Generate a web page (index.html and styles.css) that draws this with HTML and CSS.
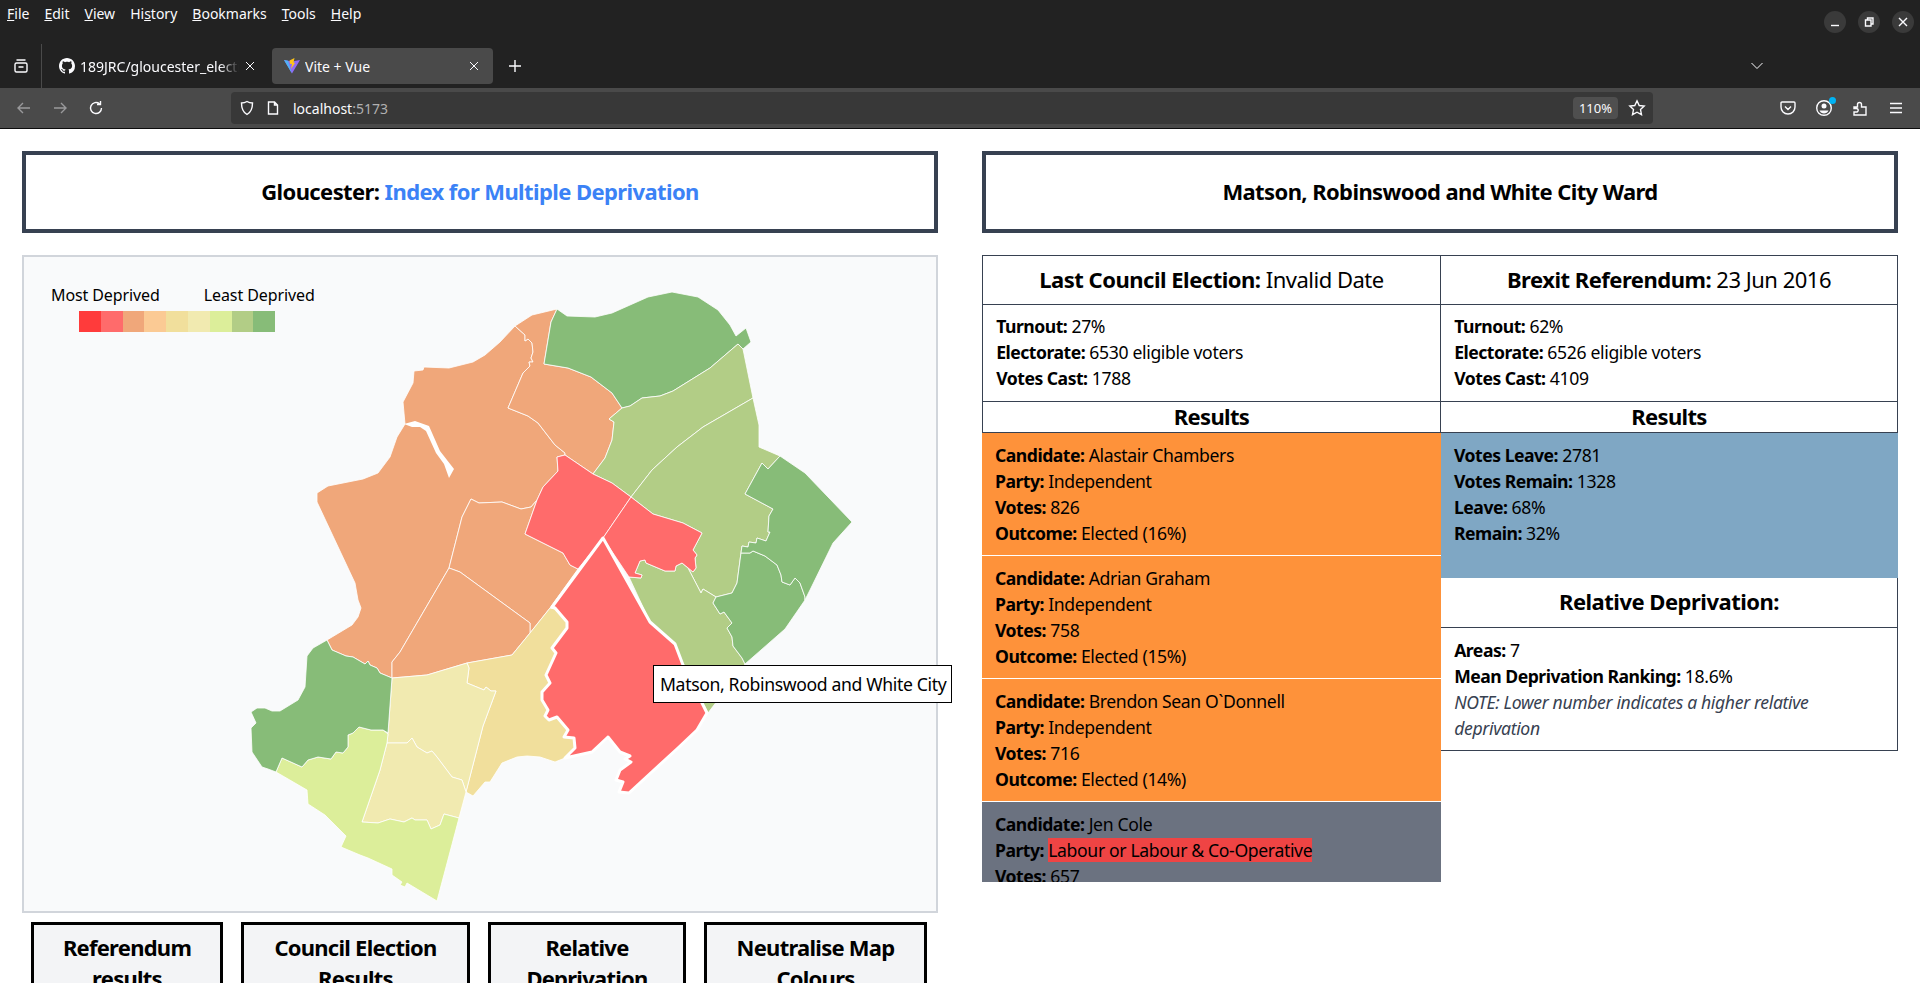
FILE: index.html
```html
<!DOCTYPE html>
<html lang="en">
<head>
    <meta charset="UTF-8">
    <meta name="viewport" content="width=device-width, initial-scale=1.0">
    <title>Vite + Vue</title>
    <link rel="stylesheet" href="styles.css">
</head>
<body>
    <!-- browser frame -->
    <div class="menu-row">
        <nav class="menu-items">
            <span><u>F</u>ile</span>
            <span><u>E</u>dit</span>
            <span><u>V</u>iew</span>
            <span>Hi<u>s</u>tory</span>
            <span><u>B</u>ookmarks</span>
            <span><u>T</u>ools</span>
            <span><u>H</u>elp</span>
        </nav>
        <div class="window-btns">
            <span class="window-btn"><svg width="12" height="12" viewBox="0 0 12 12"><path d="M2 9.5h8" class="ico"/></svg></span>
            <span class="window-btn"><svg width="12" height="12" viewBox="0 0 12 12"><path d="M2.5 4h5.500v6h-5.500zM4.500 4V2h5.500v6H8" class="ico"/></svg></span>
            <span class="window-btn"><svg width="12" height="12" viewBox="0 0 12 12"><path d="M2 2l8 8M10 2l-8 8" class="ico"/></svg></span>
        </div>
    </div>
    <div class="tab-row">
        <span class="tray-icon"><svg width="16" height="16" viewBox="0 0 16 16"><rect x="2" y="5" width="12" height="9" rx="1.500" class="ico"/><path d="M3.500 2h9M5.500 9h5" class="ico"/></svg></span>
        <div class="tab">
            <svg width="16" height="16" viewBox="0 0 16 16"><path fill="#fbfbfe" d="M8 0C3.58 0 0 3.58 0 8c0 3.54 2.29 6.53 5.47 7.59.4.07.55-.17.55-.38 0-.19-.01-.82-.01-1.49-2.01.37-2.53-.49-2.69-.94-.09-.23-.48-.94-.82-1.13-.28-.15-.68-.52-.01-.53.63-.01 1.08.58 1.23.82.72 1.21 1.87.87 2.33.66.07-.52.28-.87.51-1.07-1.78-.2-3.64-.89-3.64-3.95 0-.87.31-1.59.82-2.15-.08-.2-.36-1.02.08-2.12 0 0 .67-.21 2.2.82.64-.18 1.32-.27 2-.27.68 0 1.36.09 2 .27 1.53-1.04 2.2-.82 2.2-.82.44 1.1.16 1.92.08 2.12.51.56.82 1.27.82 2.15 0 3.07-1.87 3.75-3.65 3.95.29.25.54.73.54 1.48 0 1.07-.01 1.93-.01 2.2 0 .21.15.46.55.38A8.013 8.013 0 0016 8c0-4.42-3.58-8-8-8z"/></svg>
            <span class="tab-title tab-title-fade">189JRC/gloucester_elections</span>
            <svg width="12" height="12" viewBox="0 0 12 12"><path d="M2 2l8 8M10 2l-8 8" class="ico-thin"/></svg>
        </div>
        <div class="tab tab-active">
            <svg width="16" height="16" viewBox="0 0 16 16"><path fill="#8f6bf5" d="M0 2l8 1.500L16 2 8 15.500z"/><path fill="#4fb3f5" d="M0 2l4 .800L8 15.500z"/><path fill="#ffc517" d="M5.500 2.500L10.500 0 9.500 4.500 11 5 7 11l1-5-2-.300z"/></svg>
            <span class="tab-title">Vite + Vue</span>
            <svg width="12" height="12" viewBox="0 0 12 12"><path d="M2 2l8 8M10 2l-8 8" class="ico-thin"/></svg>
        </div>
        <span class="new-tab"><svg width="14" height="14" viewBox="0 0 14 14"><path d="M7 1v12M1 7h12" class="ico"/></svg></span>
        <span class="tab-list"><svg width="14" height="10" viewBox="0 0 14 10"><path d="M1.500 2L7 7.500 12.500 2" class="ico-thin"/></svg></span>
    </div>
    <div class="toolbar">
        <div class="nav-btns">
            <svg width="16" height="16" viewBox="0 0 16 16"><path d="M14 8H2M7 3L2 8l5 5" class="ico ico-off"/></svg>
            <svg width="16" height="16" viewBox="0 0 16 16"><path d="M2 8h12M9 3l5 5-5 5" class="ico ico-off"/></svg>
            <svg width="16" height="16" viewBox="0 0 16 16"><path d="M13.500 8A5.500 5.500 0 1 1 11.500 3.800M12.500 1v3.500H9" class="ico"/></svg>
        </div>
        <div class="url-bar">
            <svg width="16" height="16" viewBox="0 0 16 16"><path d="M8 1.500c2 1.200 3.500 1.500 5.500 1.500 0 5-1 9-5.500 11.500C3.500 12 2.500 8 2.500 3c2 0 3.500-.3 5.500-1.500z" class="ico"/></svg>
            <svg width="14" height="16" viewBox="0 0 14 16"><path d="M2.500 2h6l3 3v9h-9zM8.500 2v3h3" class="ico"/></svg>
            <span class="url-text">localhost<span class="url-port">:5173</span></span>
            <span class="zoom-badge">110%</span>
            <svg class="star" width="18" height="18" viewBox="0 0 18 18"><path d="M9 1.800l2.200 4.700 5 .6-3.700 3.500 1 5.100L9 13.200l-4.500 2.500 1-5.100L1.800 7.100l5-.6z" class="ico"/></svg>
        </div>
        <div class="tool-icons">
            <svg width="18" height="18" viewBox="0 0 18 18"><path d="M3 3h12c.6 0 1 .4 1 1v4c0 4-3 7-7 7s-7-3-7-7V4c0-.6.4-1 1-1zM6 7.500l3 3 3-3" class="ico"/></svg>
            <span class="profile-icon">
                <svg width="18" height="18" viewBox="0 0 18 18"><circle cx="9" cy="9" r="7.300" class="ico"/><circle cx="9" cy="7" r="2.500" fill="#fbfbfe"/><path fill="#fbfbfe" d="M4.500 11.500h9c-.8 2-2.500 3-4.500 3s-3.700-1-4.500-3z"/></svg>
                <span class="profile-dot"></span>
            </span>
            <svg width="18" height="18" viewBox="0 0 18 18"><path d="M3 8h3.500V5.500a2 2 0 1 1 4 0V8H15v8H3v-3h2a1.800 1.800 0 1 0 0-3.500H3z" class="ico"/></svg>
            <svg width="18" height="18" viewBox="0 0 18 18"><path d="M3 4.500h12M3 9h12M3 13.500h12" class="ico"/></svg>
        </div>
    </div>

    <!-- page -->
    <main class="page">
        <section class="col">
            <h1 class="title-box">Gloucester: <span class="title-accent">Index for Multiple Deprivation</span></h1>
            <div class="map-box">
                <svg class="map" viewBox="24 257 912 654">
                    <polygon class="w-orange" points="515,326 500,342 485,355 473,362 449,368 424,367 423,370 414,371 413,383 403,402 405,424 397,437 390,457 378,473 363,479 328,486 317,493 317,502 355,583 358,600 361,608 358,617 352,625 327,640 332,650 346,656 353,657 365,664 368,661 370,665 377,668 380,673 392,678 392,662 400,652 449,568 462,517 471,499 479,503 502,502 521,509 531,507 537,500 543,487 558,471 557,457 565,455 565,453 555,445 538,423 528,416 508,408 523,373 530,366 529,362 533,362 531,358 533,352 532,343 528,339 525,341 525,335"/>
                    <polygon class="w-orange" points="515,326 532,315 557,309 551,322 544,364 568,368 591,377 612,393 622,408 609,419 614,422 612,440 605,458 593,474 565,455 565,453 555,445 538,423 528,416 508,408 523,373 530,366 529,362 533,362 531,358 533,352 532,343 528,339 525,341 525,335"/>
                    <polygon class="w-orange" points="471,499 479,503 502,502 521,509 531,507 537,500 531,517 525,534 563,553 570,565 578,569 550,608 530,633 530,623 460,572 449,568 462,517"/>
                    <polygon class="w-orange" points="449,568 460,572 530,623 530,633 512,655 467,663 427,675 392,678 392,662 400,652"/>
                    <polygon class="river" points="404,424 415,421 429,426 440,451 454,469 449,478 444,464 436,453 426,431 420,427 412,427"/>
                    <polygon class="w-green" points="557,309 567,316 595,317 612,313 648,297 672,292 698,297 718,310 730,325 736,336 746,328 751,342 743,349 738,344 710,368 673,391 660,396 642,398 630,406 622,408 612,393 591,377 568,368 544,364 551,322"/>
                    <polygon class="w-sage" points="622,408 630,406 642,398 660,396 673,391 710,368 738,344 743,349 753,398 703,427 677,447 652,470 631,497 612,483 593,474 605,458 612,440 614,422 609,419"/>
                    <polygon class="w-sage" points="753,398 759,425 759,447 780,456 768,469 762,463 745,494 773,509 769,516 768,532 770,532 766,541 757,538 756,543 749,542 748,547 742,546 741,553 737,583 732,593 716,597 703,589 701,593 688,568 682,563 687,567 693,572 696,568 695,558 697,555 693,550 702,533 683,523 653,514 631,497 652,470 677,447 703,427"/>
                    <polygon class="w-sage" points="629,577 641,578 642,575 635,573 640,561 645,560 646,563 665,571 675,571 676,566 682,563 688,568 701,593 703,589 716,597 713,603 720,614 724,612 732,623 727,628 732,637 733,646 742,658 745,664 708,713 683,665 675,644 650,622"/>
                    <polygon class="w-green" points="716,597 732,593 737,583 741,553 750,553 753,551 765,556 777,565 781,575 782,582 790,585 795,578 800,583 805,597 805,600 785,629 745,664 742,658 733,646 732,637 727,628 732,623 724,612 720,614 713,603"/>
                    <polygon class="w-green" points="780,456 805,473 852,522 833,543 810,590 805,600 805,597 800,583 795,578 790,585 782,582 781,575 777,565 765,556 753,551 750,553 741,553 742,546 748,547 749,542 756,543 757,538 766,541 770,532 768,532 769,516 773,509 745,494 762,463 768,469"/>
                    <polygon class="w-red" points="558,471 557,457 565,455 593,474 612,483 631,497 603,538 578,569 570,565 563,553 525,534 531,517 537,500 543,487"/>
                    <polygon class="w-red" points="631,497 653,514 683,523 702,533 693,550 697,555 695,558 696,568 693,572 687,567 682,563 676,566 675,571 665,571 646,563 645,560 640,561 635,573 642,575 641,578 629,577 603,538"/>
                    <polygon class="w-yellow" points="467,663 512,655 530,633 550,608 555,609 567,622 567,628 552,648 556,653 546,675 550,683 542,692 542,700 548,710 545,716 549,720 557,717 568,730 564,737 574,738 575,748 565,758 555,762 540,757 527,756 517,757 502,763 490,782 485,782 473,796 466,792 483,726 496,691 491,691 486,687 484,690 467,683 469,668"/>
                    <polygon class="w-pale" points="392,678 427,675 467,663 469,668 467,683 484,690 486,687 491,691 496,691 483,726 466,792 462,780 452,777 437,757 432,751 427,753 422,750 417,747 412,738 407,743 387,743 388,733"/>
                    <polygon class="w-pale" points="387,743 407,743 412,738 417,747 422,750 427,753 432,751 437,757 452,777 462,780 466,792 459,818 444,814 440,825 431,829 427,820 415,820 412,818 404,822 390,819 378,823 362,822 380,770"/>
                    <polygon class="w-lime" points="276,772 282,758 302,767 308,760 318,757 331,759 336,752 343,753 348,747 348,735 353,733 359,727 371,730 383,730 388,734 387,743 380,770 362,822 378,823 390,819 404,822 412,818 415,820 427,820 431,829 440,825 444,814 459,818 437,901 407,883 405,887 400,885 402,882 392,875 392,869 368,858 360,855 341,847 346,836 325,815 308,804 307,790"/>
                    <polygon class="w-green" points="327,640 332,650 346,656 353,657 365,664 368,661 370,665 377,668 380,673 392,678 388,733 383,730 371,730 359,727 353,733 348,735 348,747 343,753 336,752 331,759 318,757 308,760 302,767 282,758 276,772 268,769 262,767 252,752 251,728 256,723 251,712 257,708 265,708 272,711 280,711 298,700 305,687 307,656 313,648"/>
                    <polygon class="w-red w-selected" points="603,538 650,622 675,644 683,665 707,713 697,730 678,748 629,793 619,792 623,782 616,780 620,770 631,762 625,759 630,756 620,752 608,737 592,752 565,758 575,748 574,738 564,737 568,730 557,717 549,720 545,716 548,710 542,700 542,692 550,683 546,675 556,653 552,648 567,628 567,622 555,608 552,607"/>
                </svg>
                <div class="legend">
                    <div class="legend-labels"><span>Most Deprived</span><span>Least Deprived</span></div>
                    <div class="legend-scale">
                        <i class="c1"></i><i class="c2"></i><i class="c3"></i><i class="c4"></i><i class="c5"></i><i class="c6"></i><i class="c7"></i><i class="c8"></i><i class="c9"></i>
                    </div>
                </div>
                <div class="tooltip">Matson, Robinswood and White City</div>
            </div>
            <div class="btn-row">
                <button class="map-btn">Referendum results</button>
                <button class="map-btn">Council Election Results</button>
                <button class="map-btn">Relative Deprivation</button>
                <button class="map-btn">Neutralise Map Colours</button>
            </div>
        </section>

        <section class="col">
            <h1 class="title-box">Matson, Robinswood and White City Ward</h1>
            <div class="ward-grid">
                <div class="ward-col">
                    <h2 class="cell cell-head"><b>Last Council Election:</b> Invalid Date</h2>
                    <div class="cell cell-info">
                        <p><b>Turnout:</b> 27%</p>
                        <p><b>Electorate:</b> 6530 eligible voters</p>
                        <p><b>Votes Cast:</b> 1788</p>
                    </div>
                    <h3 class="cell cell-results">Results</h3>
                    <div class="candidates">
                        <div class="candidate ind">
                            <p><b>Candidate:</b> Alastair Chambers</p>
                            <p><b>Party:</b> Independent</p>
                            <p><b>Votes:</b> 826</p>
                            <p><b>Outcome:</b> Elected (16%)</p>
                        </div>
                        <div class="candidate ind">
                            <p><b>Candidate:</b> Adrian Graham</p>
                            <p><b>Party:</b> Independent</p>
                            <p><b>Votes:</b> 758</p>
                            <p><b>Outcome:</b> Elected (15%)</p>
                        </div>
                        <div class="candidate ind">
                            <p><b>Candidate:</b> Brendon Sean O`Donnell</p>
                            <p><b>Party:</b> Independent</p>
                            <p><b>Votes:</b> 716</p>
                            <p><b>Outcome:</b> Elected (14%)</p>
                        </div>
                        <div class="candidate lab">
                            <p><b>Candidate:</b> Jen Cole</p>
                            <p><b>Party:</b> <span class="party-lab">Labour or Labour &amp; Co-Operative</span></p>
                            <p><b>Votes:</b> 657</p>
                        </div>
                    </div>
                </div>
                <div class="ward-col">
                    <h2 class="cell cell-head"><b>Brexit Referendum:</b> 23 Jun 2016</h2>
                    <div class="cell cell-info">
                        <p><b>Turnout:</b> 62%</p>
                        <p><b>Electorate:</b> 6526 eligible voters</p>
                        <p><b>Votes Cast:</b> 4109</p>
                    </div>
                    <h3 class="cell cell-results">Results</h3>
                    <div class="brexit">
                        <p><b>Votes Leave:</b> 2781</p>
                        <p><b>Votes Remain:</b> 1328</p>
                        <p><b>Leave:</b> 68%</p>
                        <p><b>Remain:</b> 32%</p>
                    </div>
                    <h2 class="cell cell-head cell-rel"><b>Relative Deprivation:</b></h2>
                    <div class="cell cell-info cell-info-open">
                        <p><b>Areas:</b> 7</p>
                        <p><b>Mean Deprivation Ranking:</b> 18.6%</p>
                        <p class="note">NOTE: Lower number indicates a higher relative deprivation</p>
                    </div>
                </div>
            </div>
        </section>
    </main>
</body>
</html>
```

FILE: styles.css
```css
html, body {
    margin: 0;
    height: 983px;
    overflow: hidden;
}

body {
    font-family: "Noto Sans", sans-serif;
    color: #000;
    background: #fff;
}

/* Browser frame */
.menu-row {
    height: 44px;
    background: #222;
    color: #fbfbfe;
    display: flex;
    justify-content: space-between;
    font-size: 14px;
}

.menu-items {
    display: flex;
    gap: 15px;
    padding: 4px 0 0 7px;
    line-height: 20px;
}

.window-btns {
    display: flex;
    gap: 12px;
    padding: 11px 6px 0 0;
}

.window-btn {
    width: 22px;
    height: 22px;
    border-radius: 50%;
    background: #3a3a3a;
    display: flex;
    align-items: center;
    justify-content: center;
}

.ico {
    fill: none;
    stroke: #fbfbfe;
    stroke-width: 1.4;
}

.ico-off {
    opacity: .45;
}

.ico-thin {
    fill: none;
    stroke: #fbfbfe;
    stroke-width: 1;
}

.tab-row {
    height: 44px;
    background: #222;
    color: #fbfbfe;
    display: flex;
    align-items: center;
    font-size: 14px;
}

.tray-icon {
    width: 42px;
    height: 44px;
    border-right: 1px solid #4a4a4a;
    box-sizing: border-box;
    display: flex;
    align-items: center;
    justify-content: center;
}

.tab {
    height: 36px;
    display: flex;
    align-items: center;
    gap: 5px;
    box-sizing: border-box;
    border-radius: 4px;
    width: 230px;
    padding: 0 16px 0 17px;
}

.tab-active {
    background: #4a4a4a;
    width: 221px;
    padding: 0 13px 0 12px;
}

.tab-title {
    flex: 1;
    overflow: hidden;
    white-space: nowrap;
}

.tab-title-fade {
    -webkit-mask-image: linear-gradient(90deg, #000 88%, transparent);
    mask-image: linear-gradient(90deg, #000 88%, transparent);
}

.new-tab {
    margin-left: 15px;
    display: flex;
}

.tab-list {
    margin-left: auto;
    margin-right: 156px;
    display: flex;
}

.toolbar {
    height: 41px;
    box-sizing: border-box;
    background: #4a4a4a;
    border-bottom: 1px solid #0c0c0d;
    display: flex;
    align-items: center;
    color: #fbfbfe;
    font-size: 14px;
}

.nav-btns {
    width: 231px;
    box-sizing: border-box;
    display: flex;
    gap: 20px;
    padding-left: 16px;
}

.url-bar {
    width: 1422px;
    height: 32px;
    background: #383838;
    border-radius: 4px;
    display: flex;
    align-items: center;
    padding: 0 7px 0 8px;
    gap: 11px;
    box-sizing: border-box;
}

.url-text {
    flex: 1;
    margin-left: 2px;
}

.url-port {
    color: #b0b0b0;
}

.zoom-badge {
    background: #4f4f4f;
    font-size: 13px;
    padding: 2px 6px;
    border-radius: 4px;
}

.star {
    margin-left: -1px;
}

.tool-icons {
    display: flex;
    gap: 18px;
    padding-left: 126px;
    align-items: center;
}

.profile-icon {
    position: relative;
    display: flex;
}

.profile-dot {
    position: absolute;
    top: -2px;
    right: -3px;
    width: 7px;
    height: 7px;
    border-radius: 50%;
    background: #00b3f4;
}

/* Page */
.page {
    display: grid;
    grid-template-columns: 916px 916px;
    gap: 44px;
    padding: 22px 22px 0;
    font-size: 17.6px;
    letter-spacing: -.35px;
}

b {
    letter-spacing: -.5px;
}

.title-box {
    margin: 0;
    height: 82px;
    box-sizing: border-box;
    border: 4px solid #374151;
    font-size: 22px;
    line-height: 72px;
    font-weight: 700;
    letter-spacing: -.6px;
    text-align: center;
}

.title-accent {
    color: #3b82f6;
}

.map-box {
    position: relative;
    margin-top: 22px;
    height: 658px;
    box-sizing: border-box;
    border: 2px solid #d1d5db;
    background: #f9fafb;
}

.map {
    display: block;
    width: 100%;
    height: 100%;
}

.map polygon {
    stroke: #fff;
    stroke-width: .8;
    stroke-linejoin: round;
}

.w-orange { fill: #f0a77a; }
.w-red { fill: #ff6b6b; }
.w-green { fill: #87bc78; }
.w-sage { fill: #b2cd86; }
.w-lime { fill: #dcee9a; }
.w-yellow { fill: #f1df9c; }
.w-pale { fill: #f1eab0; }
.map .river { fill: #fff; stroke: none; }
.map .w-selected { stroke-width: 3; }

.legend {
    position: absolute;
    top: 25px;
    left: 27px;
    font-size: 16px;
    line-height: 26px;
    letter-spacing: -.1px;
}

.legend-labels {
    display: flex;
    gap: 44px;
}

.legend-scale {
    display: flex;
    margin: 3px 0 0 28px;
}

.legend-scale i {
    width: 21.8px;
    height: 21px;
}

.c1 { background: #ff3b3b; }
.c2 { background: #ff6b6b; }
.c3 { background: #f0a77a; }
.c4 { background: #fbca94; }
.c5 { background: #f1df9c; }
.c6 { background: #f1eab0; }
.c7 { background: #dcee9a; }
.c8 { background: #b2cd86; }
.c9 { background: #87bc78; }

.tooltip {
    position: absolute;
    left: 629px;
    top: 408px;
    width: 299px;
    height: 38px;
    box-sizing: border-box;
    border: 1px solid #000;
    background: #fff;
    font-size: 17.6px;
    line-height: 37px;
    padding-left: 6px;
    white-space: nowrap;
}

.btn-row {
    display: grid;
    grid-template-columns: 192px 229px 198px 223px;
    gap: 18px;
    padding: 9px 9px 0;
    align-items: start;
}

.map-btn {
    font-family: inherit;
    font-size: 22px;
    font-weight: 700;
    line-height: 30.8px;
    letter-spacing: -.75px;
    color: #000;
    background: #f3f4f6;
    border: 3px solid #000;
    padding: 7px 13px;
}

/* Ward panels */
.ward-grid {
    display: grid;
    grid-template-columns: 459px 457px;
    margin-top: 22px;
}

.ward-col {
    min-width: 0;
}

.cell {
    margin: 0;
    border: 1px solid #374151;
    border-top: 0;
    box-sizing: border-box;
}

.ward-col + .ward-col .cell {
    border-left: 0;
}

.cell-head {
    border-top: 1px solid #374151;
    font-size: 22px;
    font-weight: 400;
    line-height: 30.8px;
    letter-spacing: -.5px;
    padding-top: 8px;
    text-align: center;
    height: 50px;
}

.cell-head b {
    letter-spacing: -.5px;
}

.cell-rel {
    border-top: 0;
    height: 50px;
    padding-top: 8px;
}

.cell-info {
    padding: 8px 13.2px;
    line-height: 26px;
    height: 97px;
}

.cell-info-open {
    height: auto;
    padding-top: 9px;
    padding-bottom: 9px;
}

.cell-info p,
.candidate p,
.brexit p {
    margin: 0;
}

.note {
    font-style: italic;
    color: #374151;
}

.cell-results {
    font-size: 22px;
    font-weight: 700;
    line-height: 29px;
    letter-spacing: -.65px;
    height: 31px;
    text-align: center;
}

.candidates {
    height: 449px;
    overflow: hidden;
    line-height: 26px;
}

.candidate {
    height: 123px;
    box-sizing: border-box;
    padding: 9px 13px;
    border-bottom: 1px solid #fff;
}

.ind { background: #fe923a; }
.lab { background: #6b7280; }
.party-lab { background: #ef4444; }

.brexit {
    background: #7fa7c4;
    height: 145px;
    box-sizing: border-box;
    padding: 9px 13px;
    line-height: 26px;
}
```
